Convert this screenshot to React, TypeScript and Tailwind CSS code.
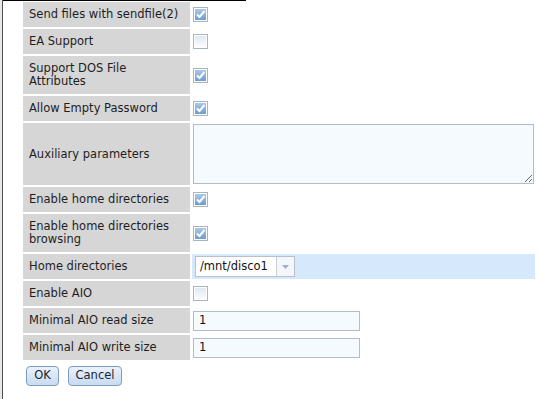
import React from "react";

const font = { fontFamily: '"DejaVu Sans", Verdana, sans-serif' };

function Checkbox({ checked }: { checked: boolean }) {
  return (
    <div className="w-[15px] h-[15px] border border-[#aab3c2] bg-white p-[1px]">
      {checked ? (
        <div className="w-full h-full bg-gradient-to-b from-[#a9c8e8] to-[#6e9dcf] relative">
          <svg width="11" height="11" viewBox="0 0 11 11" className="absolute left-0 top-0">
            <path d="M2 5.5 L4.5 8 L9.5 2" stroke="#ffffff" strokeWidth="2" fill="none" />
          </svg>
        </div>
      ) : (
        <div className="w-full h-full bg-gradient-to-b from-[#dfe8f3] to-[#fbfdff]" />
      )}
    </div>
  );
}

function Label({ children }: { children: React.ReactNode }) {
  return (
    <div className="bg-[#d6d6d6] px-[6px] flex items-center text-[11.5px] leading-[13px] text-[#1e1e1e] whitespace-nowrap">
      <div>{children}</div>
    </div>
  );
}

function Value({ children, className = "" }: { children?: React.ReactNode; className?: string }) {
  return <div className={"flex items-center pl-[1px] " + className}>{children}</div>;
}

function TextInput({ value }: { value: string }) {
  return (
    <div className="w-[167px] h-[20px] border border-[#b4bccb] bg-[#f5faff] flex items-center pl-[5px] text-[11.5px] text-[#111]">
      {value}
    </div>
  );
}

export default function App() {
  return (
    <div className="flex h-[399px] w-[542px] bg-white overflow-hidden" style={font}>
      <div className="w-[2px] bg-[#e8e8e8]" />
      <div className="w-[1px] bg-[#505050]" />
      <div className="flex flex-col flex-1">
        <div className="h-[1px] w-[243px] bg-black" />
        <div className="ml-[20px] mt-[1px] grid grid-cols-[167px_343px] gap-[2px]">
          <Label>Send files with sendfile(2)</Label>
          <Value className="h-[25px]"><Checkbox checked /></Value>

          <Label>EA Support</Label>
          <Value className="h-[25px]"><Checkbox checked={false} /></Value>

          <Label>Support DOS File<br />Attributes</Label>
          <Value className="h-[38px]"><Checkbox checked /></Value>

          <Label>Allow Empty Password</Label>
          <Value className="h-[25px]"><Checkbox checked /></Value>

          <Label>Auxiliary parameters</Label>
          <Value className="h-[62px]">
            <textarea
              readOnly
              className="w-[341px] h-[60px] border border-[#b4bccb] bg-[#f5faff] outline-none resize block"
            />
          </Value>

          <Label>Enable home directories</Label>
          <Value className="h-[25px]"><Checkbox checked /></Value>

          <Label>Enable home directories<br />browsing</Label>
          <Value className="h-[38px]"><Checkbox checked /></Value>

          <Label>Home directories</Label>
          <Value className="h-[25px] bg-[#d6e9fc] pl-[3px]">
            <div className="flex h-[21px] border border-[#b8c0cc] bg-white">
              <div className="flex items-center px-[4px] text-[11.5px] text-[#111] w-[80px] whitespace-nowrap">/mnt/disco1</div>
              <div className="w-[18px] border-l border-[#c8ced8] bg-[#f4f6f9] flex items-center justify-center">
                <svg width="7" height="4" viewBox="0 0 7 4">
                  <path d="M0 0 L7 0 L3.5 4 Z" fill="#9fb0c6" />
                </svg>
              </div>
            </div>
          </Value>

          <Label>Enable AIO</Label>
          <Value className="h-[25px]"><Checkbox checked={false} /></Value>

          <Label>Minimal AIO read size</Label>
          <Value className="h-[25px]"><TextInput value="1" /></Value>

          <Label>Minimal AIO write size</Label>
          <Value className="h-[25px]"><TextInput value="1" /></Value>
        </div>
        <div className="ml-[23px] mt-[6px] flex gap-[9px]">
          <button className="w-[33px] h-[20px] rounded-[4px] border border-[#7d9cbf] bg-gradient-to-b from-[#eaf2fc] to-[#c7dbf1] text-[11.5px] text-[#1a2633] flex items-center justify-center">
            OK
          </button>
          <button className="w-[54px] h-[20px] rounded-[4px] border border-[#7d9cbf] bg-gradient-to-b from-[#eaf2fc] to-[#c7dbf1] text-[11.5px] text-[#1a2633] flex items-center justify-center">
            Cancel
          </button>
        </div>
      </div>
    </div>
  );
}
